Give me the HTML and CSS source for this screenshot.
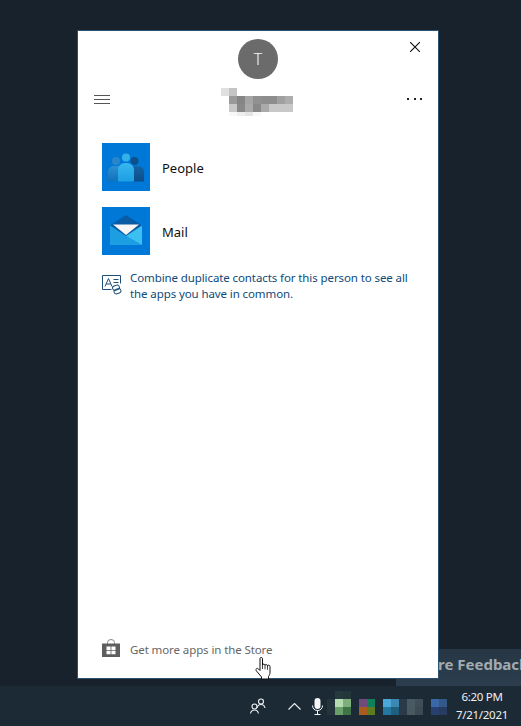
FILE: index.html
```html
<!DOCTYPE html>
<html lang="en">
<head>
    <meta charset="UTF-8">
    <title>My People flyout</title>
    <link rel="stylesheet" href="styles.css">
</head>
<body>
    <div class="feedback">Share Feedback</div>

    <div class="desktop">
        <div class="flyout">
            <svg class="close" width="10" height="10" viewBox="0 0 10 10"><path d="M0 0L10 10M10 0L0 10" stroke="#111" stroke-width="1.1" fill="none"/></svg>

            <div class="avatar">T</div>

            <div class="namebar">
                <div class="burger"><span></span><span></span><span></span></div>
                <svg class="name" width="75" height="34" viewBox="221 82 75 34" shape-rendering="crispEdges">
                    <rect x="221" y="88" width="8" height="8" fill="#e0e0e0"/><rect x="229" y="88" width="8" height="8" fill="#c4c4c4"/>
                    <rect x="229" y="96" width="8" height="8" fill="#999"/><rect x="237" y="96" width="8" height="8" fill="#858585"/>
                    <rect x="245" y="96" width="8" height="8" fill="#a5a5a5"/><rect x="253" y="96" width="8" height="8" fill="#919191"/>
                    <rect x="261" y="96" width="8" height="8" fill="#8d8d8d"/><rect x="269" y="96" width="8" height="8" fill="#8d8d8d"/>
                    <rect x="277" y="96" width="8" height="8" fill="#a0a0a0"/><rect x="285" y="96" width="8" height="8" fill="#adadad"/>
                    <rect x="229" y="104" width="8" height="8" fill="#c8c8c8"/><rect x="237" y="104" width="8" height="8" fill="#888"/>
                    <rect x="245" y="104" width="8" height="8" fill="#aaa"/><rect x="253" y="104" width="8" height="8" fill="#888"/>
                    <rect x="261" y="104" width="8" height="8" fill="#aaa"/><rect x="269" y="104" width="8" height="8" fill="#c8c8c8"/>
                    <rect x="277" y="104" width="8" height="8" fill="#c8c8c8"/><rect x="285" y="104" width="8" height="8" fill="#c8c8c8"/>
                    <rect x="229" y="112" width="8" height="4" fill="#f8f8f8"/><rect x="237" y="112" width="8" height="4" fill="#eee"/>
                    <rect x="245" y="112" width="8" height="4" fill="#e4e4e4"/><rect x="253" y="112" width="8" height="4" fill="#f8f8f8"/>
                </svg>
                <div class="dots"><span></span><span></span><span></span></div>
            </div>

            <div class="apps">
                <div class="app">
                    <svg class="tile" width="48" height="48" viewBox="0 0 48 48">
                        <defs>
                            <linearGradient id="bodyLeft" x1="0" y1="0" x2="0" y2="1"><stop offset="0" stop-color="#2f8fd2"/><stop offset="1" stop-color="#0f70bc"/></linearGradient>
                            <linearGradient id="bodyRight" x1="0" y1="0" x2="0" y2="1"><stop offset="0" stop-color="#1464a6"/><stop offset="1" stop-color="#0d4c88"/></linearGradient>
                            <linearGradient id="bodyMid" x1="0" y1="0" x2="0" y2="1"><stop offset="0" stop-color="#38b7ee"/><stop offset="1" stop-color="#1c9fe4"/></linearGradient>
                        </defs>
                        <rect width="48" height="48" fill="#0078d7"/>
                        <circle cx="14" cy="18" r="4" fill="#2a86c8"/>
                        <circle cx="32.500" cy="18" r="4" fill="#0f4f8a"/>
                        <path d="M6 38.500V29c0-3.500 2.500-6 6-6h6v15.500z" fill="url(#bodyLeft)"/>
                        <path d="M42 38.500V29c0-3.500-2.500-6-6-6h-6v15.500z" fill="url(#bodyRight)"/>
                        <circle cx="24" cy="14.500" r="4" fill="#35b1ea"/>
                        <path d="M16 38.500V27c0-4 3-7 7-7h2c4 0 7 3 7 7v11.500z" fill="url(#bodyMid)"/>
                    </svg>
                    <span>People</span>
                </div>
                <div class="app">
                    <svg class="tile" width="48" height="48" viewBox="0 0 48 48">
                        <rect width="48" height="48" fill="#0078d7"/>
                        <path d="M8 18.500L24 8 40 18.500 24 30z" fill="#0a5ba6"/>
                        <path d="M11 17.500H37L24 28z" fill="#f6f6f6"/>
                        <path d="M8 18.500L24 29 40 38H8z" fill="#1c9ee2"/>
                        <path d="M24 29L40 18.500V38z" fill="#3cc0f2"/>
                    </svg>
                    <span>Mail</span>
                </div>
            </div>

            <div class="tip">
                <svg class="tip-icon" width="20" height="20" viewBox="0 0 20 20" fill="none" stroke="#1f4f78">
                    <path d="M9.500 14.500H.5V.5h18v8"/>
                    <path d="M3 11.500L6.500 3.500 10 11.500M4.300 9h4.400M11.500 4.500h5M11.500 7.500h5"/>
                    <rect x="10.500" y="10.500" width="7" height="4.500" rx="2.250" transform="rotate(-20 14 12.750)"/>
                    <rect x="12" y="14" width="7" height="4.500" rx="2.250" transform="rotate(-20 15.500 16.250)"/>
                </svg>
                <p>Combine duplicate contacts for this person to see all the apps you have in common.</p>
            </div>

            <div class="store">
                <svg class="store-icon" width="18" height="18" viewBox="0 0 18 18">
                    <path d="M5.500 5V3.500a3.500 3 0 0 1 7 0V5" fill="none" stroke="#888"/>
                    <path d="M0 4.500h18V18H0z" fill="#5e5e5e"/>
                    <path d="M4.500 7.500h4.100v3.500H4.500zM9.400 7.500h4.100v3.500H9.400zM4.500 11.800h4.100v3.500H4.500zM9.400 11.800h4.100v3.500H9.400z" fill="#fff"/>
                </svg>
                <span>Get more apps in the Store</span>
            </div>
        </div>
    </div>

    <div class="taskbar">
        <svg class="tray-people" width="16" height="16" viewBox="0 0 16 16" fill="none" stroke="#eef2f4" stroke-width="1.100">
            <circle cx="11" cy="3.500" r="2.500"/><path d="M7 10c.5-2.500 2-3.500 4-3.500s3.500 1 4 3.500"/>
            <circle cx="4.500" cy="8.500" r="2.500"/><path d="M.5 15.500c.5-2.500 2-3.500 4-3.500s3.500 1 4 3.500"/>
        </svg>
        <svg class="tray-up" width="13" height="7" viewBox="0 0 13 7"><path d="M.5 6.500l6-6 6 6" fill="none" stroke="#eef2f4" stroke-width="1.100"/></svg>
        <svg class="tray-mic" width="11" height="17" viewBox="0 0 11 17">
            <rect x="2.500" y="0" width="6" height="11" rx="3" fill="#f4f6f7"/>
            <path d="M.5 7.500c0 3 2 5 5 5s5-2 5-5M5.500 12.500V16M2.500 16.500h6" fill="none" stroke="#f4f6f7"/>
        </svg>
        <svg class="tray-blur" width="120" height="24" viewBox="327 691 120 24" shape-rendering="crispEdges">
            <rect x="335" y="691" width="8" height="8" fill="#253a3c"/><rect x="343" y="691" width="8" height="8" fill="#233638"/>
            <rect x="327" y="699" width="8" height="16" fill="#23353a"/>
            <rect x="335" y="699" width="8" height="8" fill="#b5dcb0"/><rect x="343" y="699" width="8" height="8" fill="#7fae7e"/>
            <rect x="335" y="707" width="8" height="8" fill="#6a9f6a"/><rect x="343" y="707" width="8" height="8" fill="#3f7546"/>
            <rect x="359" y="699" width="8" height="8" fill="#704a7a"/><rect x="367" y="699" width="8" height="8" fill="#10805a"/>
            <rect x="359" y="707" width="8" height="8" fill="#a85c20"/><rect x="367" y="707" width="8" height="8" fill="#607a20"/>
            <rect x="383" y="699" width="8" height="8" fill="#4aa8d8"/><rect x="391" y="699" width="8" height="8" fill="#3c88b0"/>
            <rect x="383" y="707" width="8" height="8" fill="#2478a0"/><rect x="391" y="707" width="8" height="8" fill="#20607e"/>
            <rect x="399" y="699" width="8" height="16" fill="#2a3a48"/>
            <rect x="407" y="699" width="8" height="8" fill="#4a5a64"/><rect x="415" y="699" width="8" height="8" fill="#404e58"/>
            <rect x="407" y="707" width="8" height="8" fill="#4a5860"/><rect x="415" y="707" width="8" height="8" fill="#3c4a54"/>
            <rect x="431" y="699" width="8" height="8" fill="#3868a8"/><rect x="439" y="699" width="8" height="8" fill="#345888"/>
            <rect x="431" y="707" width="8" height="8" fill="#284070"/><rect x="439" y="707" width="8" height="8" fill="#283c60"/>
        </svg>
        <div class="clock">
            <div>6:20 PM</div>
            <div>7/21/2021</div>
        </div>
    </div>

    <!-- mouse pointer sits over everything -->
    <svg class="pointer" width="20" height="23" viewBox="0 0 20 23">
        <path d="M6 1.500c0-1.300 2.500-1.300 2.500 0V8c.3-1.300 2.500-1.200 2.500.3 .3-1.200 2.500-1 2.500.5 .4-1 2.500-.8 2.500.7V15c0 2-.5 3-1.500 4.500v2.500H7.500v-2L2.500 14c-1.500-1.800 .5-3.500 2-2L6 13.500z" fill="#fff" stroke="#111" stroke-width="1"/>
        <path d="M8.500 8v4M11 8.300v4M13.500 8.800v4" stroke="#111" stroke-width=".8" fill="none"/>
    </svg>
</body>
</html>
```

FILE: styles.css
```css
* {
    box-sizing: border-box;
}

html, body {
    margin: 0;
    height: 100%;
}

body {
    background: #17222d;
    font-family: "Noto Sans", "Open Sans", sans-serif;
    display: flex;
    flex-direction: column;
    position: relative;
    overflow: hidden;
}

.desktop {
    flex: 1;
    padding: 30px 0 7px 77px;
    position: relative;
}

.flyout {
    width: 362px;
    height: 649px;
    background: #fff;
    border: 1px solid #2d5270;
    display: flex;
    flex-direction: column;
    position: relative;
}

.close {
    position: absolute;
    top: 11px;
    right: 18px;
}

.avatar {
    width: 40px;
    height: 40px;
    margin: 8px auto 0;
    border-radius: 50%;
    background: #6b6b6b;
    color: #fff;
    font-size: 16px;
    font-weight: 300;
    line-height: 40px;
    text-align: center;
    will-change: transform;
}

.namebar {
    height: 34px;
    margin-top: 3px;
    padding: 0 16px;
    display: flex;
    align-items: center;
    justify-content: space-between;
}

.burger {
    width: 16px;
    display: flex;
    flex-direction: column;
    gap: 3px;
}

.burger span {
    height: 1px;
    background: #555;
}

.dots {
    width: 15px;
    display: flex;
    justify-content: space-between;
}

.dots span {
    width: 2px;
    height: 2px;
    background: #222;
}

.apps {
    margin-top: 27px;
    padding-left: 24px;
    display: flex;
    flex-direction: column;
    gap: 16px;
}

.app {
    display: flex;
    align-items: center;
    gap: 12px;
    font-size: 13px;
    color: #111;
}

.app span {
    padding-top: 2px;
}

.tile {
    display: block;
}

.tip {
    margin-top: 15px;
    padding: 0 23px 0 24px;
    display: flex;
    gap: 8px;
    font-size: 11.5px;
    letter-spacing: -0.1px;
    line-height: 16px;
    color: #0f4a78;
}

.tip p {
    margin: 0;
}

.tip-icon {
    margin-top: 5px;
    flex: none;
}

.store {
    margin-top: auto;
    padding: 0 0 19px 24px;
    display: flex;
    align-items: center;
    gap: 10px;
    height: 39px;
    font-size: 11.5px;
    letter-spacing: -0.1px;
    color: #666;
}

.store-icon {
    margin-bottom: 2px;
}

/* button of another window, mostly behind the flyout */
.feedback {
    position: absolute;
    top: 649px;
    right: 0;
    width: 125px;
    height: 37px;
    padding-left: 15px;
    background: linear-gradient(#263644, #2c3e4e);
    color: #a3abb0;
    font-size: 15px;
    font-weight: 700;
    line-height: 31px;
    white-space: nowrap;
    overflow: hidden;
}

.taskbar {
    height: 40px;
    flex: none;
    padding-left: 250px;
    display: flex;
    align-items: center;
    background: #1c2a36;
    color: #f0f0f0;
    position: relative;
}

.tray-up {
    margin-left: 22px;
}

.tray-mic {
    margin-left: 11px;
}

.tray-blur {
    margin-left: 4px;
    margin-top: -6px;
}

.clock {
    width: 70px;
    text-align: center;
    font-size: 11.5px;
    letter-spacing: -0.3px;
    line-height: 18px;
}

.pointer {
    position: absolute;
    left: 254px;
    top: 657px;
}
```
